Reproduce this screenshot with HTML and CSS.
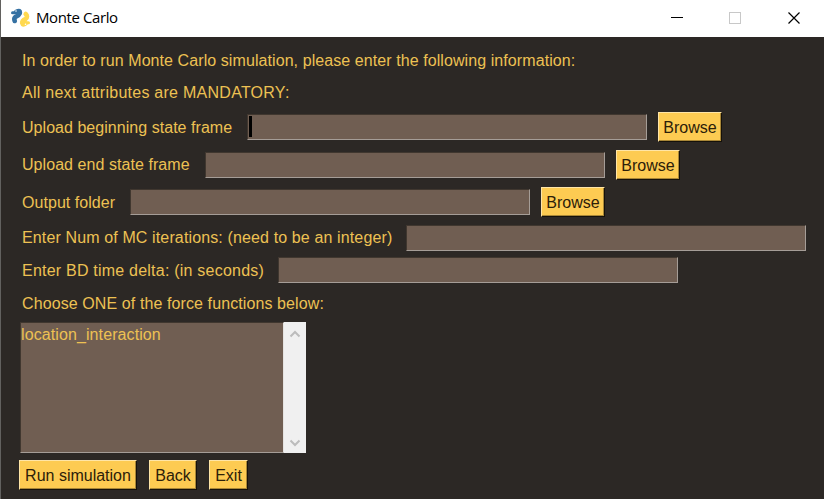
FILE: index.html
```html
<!DOCTYPE html>
<html lang="en">
<head>
<meta charset="utf-8">
<title>Monte Carlo</title>
<link rel="stylesheet" href="styles.css">
</head>
<body>
<div class="window">
  <header class="titlebar">
    <svg class="logo" width="20" height="20" viewBox="0 0 20 20">
      <path d="M5.500 3.800Q9.500 1.500 8.700 5.500Q8 7.300 5.500 8.300Q2.500 9.500 3.700 13" fill="none" stroke="#3571a3" stroke-width="4.600" stroke-linecap="round"/>
      <path d="M1.500 4.700H5" stroke="#3571a3" stroke-width="3" stroke-linecap="round"/>
      <path d="M14.700 6Q17.300 8.500 14.700 10.800Q11 12.500 11.200 15Q11.800 17.500 14.500 15.500" fill="none" stroke="#ffd94f" stroke-width="4.600" stroke-linecap="round"/>
      <path d="M15 14.700H17.500" stroke="#ffd94f" stroke-width="3" stroke-linecap="round"/>
      <circle cx="5" cy="3" r=".8" fill="#fff"/>
      <circle cx="14.500" cy="16.300" r=".8" fill="#fff"/>
    </svg>
    <span class="title">Monte Carlo</span>
    <svg class="controls" width="134" height="16" viewBox="0 0 134 16" shape-rendering="crispEdges">
      <path d="M1 8.500H13" stroke="#000" fill="none"/>
      <rect x="59.500" y="3.500" width="11" height="11" stroke="#c8c8c8" fill="none"/>
      <path d="M118.500 3.500L129.500 14.500M129.500 3.500L118.500 14.500" stroke="#000" stroke-width="1.200" fill="none" shape-rendering="auto"/>
    </svg>
  </header>
  <main class="form">
    <div class="row intro"><span class="t1">In order to run Monte Carlo simulation, please enter the following information:</span></div>
    <div class="row"><span class="t2">All next attributes are MANDATORY:</span></div>
    <div class="row file"><label class="begin">Upload beginning state frame</label><div class="field"><i class="caret"></i></div><button class="browse">Browse</button></div>
    <div class="row file tall"><label class="end">Upload end state frame</label><div class="field"></div><button class="browse">Browse</button></div>
    <div class="row file"><label class="output">Output folder</label><div class="field"></div><button class="browse">Browse</button></div>
    <div class="row number"><label class="iterations">Enter Num of MC iterations: (need to be an integer)</label><div class="field"></div></div>
    <div class="row number"><label class="delta">Enter BD time delta: (in seconds)</label><div class="field raised"></div></div>
    <div class="row choose"><span class="t3">Choose ONE of the force functions below:</span></div>
    <div class="list">
      <div class="options">location_interaction</div>
      <div class="scrollbar">
        <svg width="12" height="8" viewBox="0 0 12 8"><path d="M1.500 6.500L6 2L10.500 6.500"/></svg>
        <svg width="12" height="8" viewBox="0 0 12 8"><path d="M1.500 1.500L6 6L10.500 1.500"/></svg>
      </div>
    </div>
    <div class="actions"><button class="run">Run simulation</button><button class="back">Back</button><button class="exit">Exit</button></div>
  </main>
</div>
</body>
</html>
```
FILE: styles.css
```css
* { box-sizing: border-box; }
body { margin: 0; background: #2c2825; font: 16px/20px "Liberation Sans", Arial, sans-serif; }
.window { width: 824px; height: 499px; overflow: hidden; border-left: 1px solid #62615f; background: #2c2825; }
.titlebar { display: flex; align-items: center; height: 37px; padding: 0 20px 0 10px; background: #fff; color: #000; }
.logo { margin-top: -2px; }
.title { margin: -4px 0 0 5px; font: 15px/20px "Open Sans", "Noto Sans", sans-serif; letter-spacing: -0.4px; }
.controls { margin: -3px 0 0 auto; }
.form { padding: 7px 0 0 19px; color: #edc153; }
.row { display: flex; align-items: center; height: 32px; padding-left: 2px; white-space: nowrap; }
.intro, .number { height: 33px; }
.file { height: 37px; }
.tall { height: 38px; }
.choose { height: 35px; padding-bottom: 2px; }
.t1 { letter-spacing: 0.08px; }
.t2 { letter-spacing: 0.26px; }
.t3 { letter-spacing: 0.1px; }
.begin { width: 225px; letter-spacing: 0.04px; }
.end { width: 183px; letter-spacing: 0.06px; }
.output { width: 108px; letter-spacing: 0.05px; }
.iterations { width: 384px; letter-spacing: 0.13px; }
.delta { width: 256px; letter-spacing: 0.22px; }
.field { width: 400px; height: 26px; background: #705e52; border: 1px solid; border-color: #40372f #a59d97 #a59d97 #40372f; padding: 1px; }
.file .field { margin-top: -1px; }
.raised { margin-top: -2px; }
.caret { display: block; width: 3px; height: 21px; background: #000; }
button { height: 30px; padding: 2px 0 0; border: 1px solid; border-color: #ffe5a6 #15110a #15110a #ffe5a6; background: #fdcb52; color: #2c2009; font: inherit; border-radius: 0; white-space: nowrap; text-align: center; box-shadow: inset -1px -1px #a98737; }
.browse { width: 64px; margin: -1px 0 0 11px; }
.list { display: flex; width: 286px; height: 131px; }
.options { width: 264px; padding: 2px 0 0; background: #705e52; border: 1px solid; border-color: #40372f #e5e3e1 #a59d97 #40372f; letter-spacing: 0.1px; }
.scrollbar { display: flex; flex-direction: column; justify-content: space-between; align-items: center; width: 22px; padding: 8px 0 6px; background: #f0f0f0; }
.scrollbar path { fill: none; stroke: #bcbcbc; stroke-width: 2; }
.actions { display: flex; gap: 12px; margin: 7px 0 0 -1px; }
.run { width: 118px; }
.back { width: 48px; }
.exit { width: 39px; }
```
